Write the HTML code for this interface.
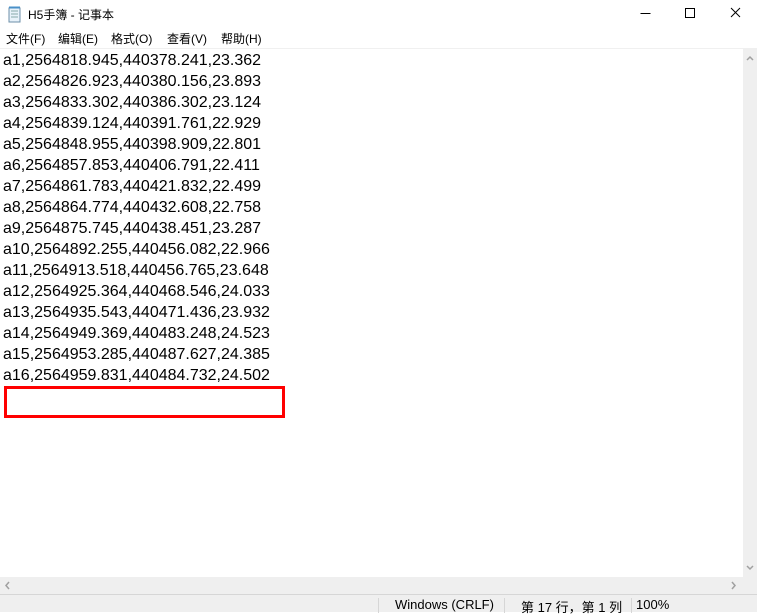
<!DOCTYPE html>
<html><head><meta charset="utf-8"><style>
*{margin:0;padding:0;box-sizing:border-box}
body{width:757px;height:612px;background:#fff;position:relative;overflow:hidden;font-family:"Liberation Sans","Noto Sans CJK SC",sans-serif}
.abs{position:absolute}
.title{left:0;top:0;width:757px;height:30px;background:#fff}
.ttext{left:28px;top:6px;font-size:12px;color:#000}
.menu{left:0;top:30px;height:18px;font-size:12px;color:#000}
.menu span{position:absolute;top:0;white-space:nowrap}
.edit{left:0;top:48px;width:743px;height:530px;border-top:1px solid #f0f0f0}
.lines{left:3px;top:50px;font-size:16px;line-height:21px;color:#000;white-space:pre}
.red{left:4px;top:386px;width:281px;height:32px;border:3px solid #f00}
.vs{left:743px;top:48px;width:14px;height:530px;background:#efefef}
.hs{left:0;top:577px;width:757px;height:17px;background:#efefef}
.sb{left:0;top:594px;width:757px;height:18px;background:#efefef;border-top:1px solid #d6d6d6;font-size:13px;color:#000}
.sep{position:absolute;top:3px;width:1px;height:15px;background:#d6d6d6}
</style></head><body>
<div class="abs title"></div>
<svg class="abs" style="left:7px;top:6px" width="16" height="17" viewBox="0 0 16 17">
<rect x="2" y="2" width="11" height="14" fill="#e8f2fa" stroke="#6c8fa8"/>
<path d="M4 5h7M4 8h7M4 11h7" stroke="#8aa" stroke-width="1"/>
<rect x="2" y="0.5" width="11" height="2" fill="#4a90c8"/>
</svg>
<div class="abs ttext">H5手簿 - 记事本</div>
<svg class="abs" style="left:640px;top:0" width="117" height="30">
<path d="M0.5 13.5h10" stroke="#000"/>
<rect x="45.5" y="8.5" width="9" height="9" fill="none" stroke="#000"/>
<path d="M91 8l9 9M100 8l-9 9" stroke="#000"/>
</svg>
<div class="abs menu"><span style="left:6px">文件(F)</span><span style="left:58px">编辑(E)</span><span style="left:111px">格式(O)</span><span style="left:167px">查看(V)</span><span style="left:221px">帮助(H)</span></div>
<div class="abs edit"></div>
<div class="abs lines">a1,2564818.945,440378.241,23.362
a2,2564826.923,440380.156,23.893
a3,2564833.302,440386.302,23.124
a4,2564839.124,440391.761,22.929
a5,2564848.955,440398.909,22.801
a6,2564857.853,440406.791,22.411
a7,2564861.783,440421.832,22.499
a8,2564864.774,440432.608,22.758
a9,2564875.745,440438.451,23.287
a10,2564892.255,440456.082,22.966
a11,2564913.518,440456.765,23.648
a12,2564925.364,440468.546,24.033
a13,2564935.543,440471.436,23.932
a14,2564949.369,440483.248,24.523
a15,2564953.285,440487.627,24.385
a16,2564959.831,440484.732,24.502</div>
<div class="abs red"></div>
<div class="abs vs"><svg width="14" height="530"><path d="M4 12l3-3 3 3" stroke="#a0a0a0" stroke-width="1.5" fill="none"/><path d="M4 518l3 3 3-3" stroke="#a0a0a0" stroke-width="1.5" fill="none"/></svg></div>
<div class="abs hs"><svg width="757" height="17"><path d="M9 5l-3 3.5 3 3.5" stroke="#a0a0a0" stroke-width="1.5" fill="none"/><path d="M732 5l3 3.5-3 3.5" stroke="#a0a0a0" stroke-width="1.5" fill="none"/></svg></div>
<div class="abs sb">
<div class="sep" style="left:378px"></div>
<div class="sep" style="left:504px"></div>
<div class="sep" style="left:631px"></div>
<span class="abs" style="left:395px;top:2px">Windows (CRLF)</span>
<span class="abs" style="left:521px;top:2px">第 17 行，第 1 列</span>
<span class="abs" style="left:636px;top:2px">100%</span>
</div>
</body></html>
